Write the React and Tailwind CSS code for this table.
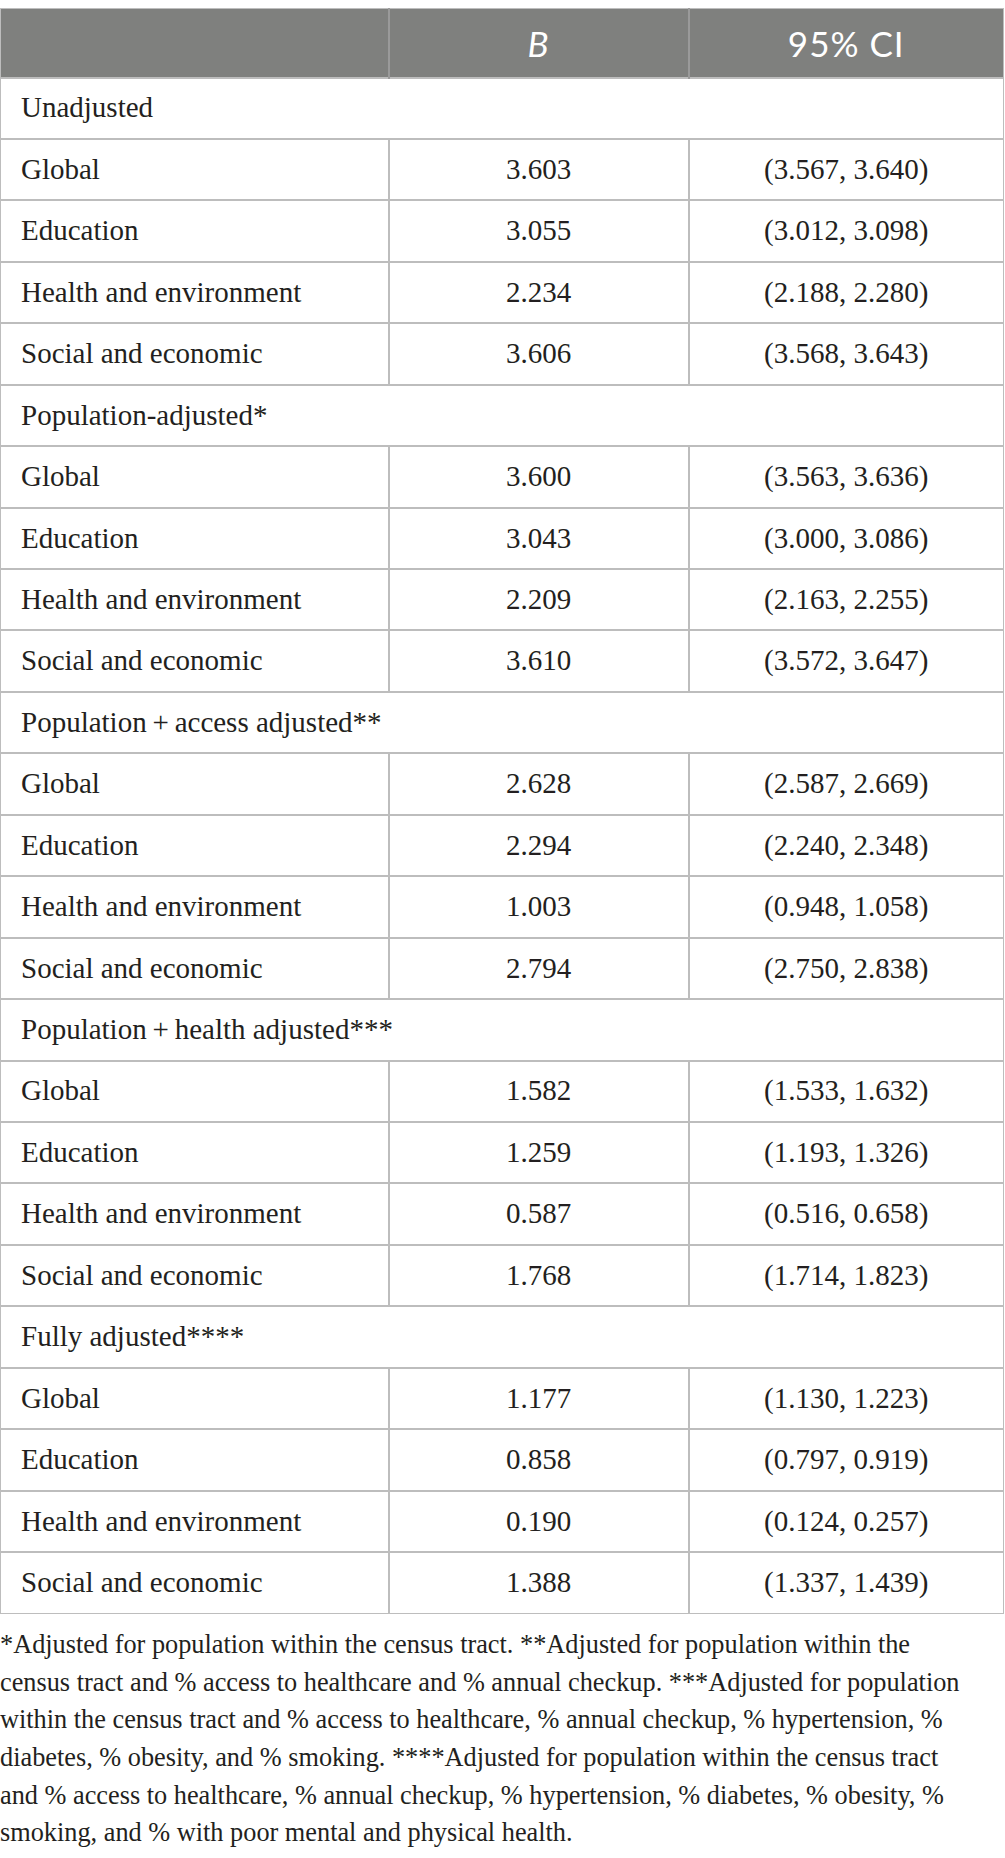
import React from 'react';

const groups = [
    {
        title: 'Unadjusted',
        rows: [
            ['Global', '3.603', '(3.567, 3.640)'],
            ['Education', '3.055', '(3.012, 3.098)'],
            ['Health and environment', '2.234', '(2.188, 2.280)'],
            ['Social and economic', '3.606', '(3.568, 3.643)'],
        ],
    },
    {
        title: 'Population-adjusted*',
        rows: [
            ['Global', '3.600', '(3.563, 3.636)'],
            ['Education', '3.043', '(3.000, 3.086)'],
            ['Health and environment', '2.209', '(2.163, 2.255)'],
            ['Social and economic', '3.610', '(3.572, 3.647)'],
        ],
    },
    {
        title: 'Population\u2009+\u2009access adjusted**',
        rows: [
            ['Global', '2.628', '(2.587, 2.669)'],
            ['Education', '2.294', '(2.240, 2.348)'],
            ['Health and environment', '1.003', '(0.948, 1.058)'],
            ['Social and economic', '2.794', '(2.750, 2.838)'],
        ],
    },
    {
        title: 'Population\u2009+\u2009health adjusted***',
        rows: [
            ['Global', '1.582', '(1.533, 1.632)'],
            ['Education', '1.259', '(1.193, 1.326)'],
            ['Health and environment', '0.587', '(0.516, 0.658)'],
            ['Social and economic', '1.768', '(1.714, 1.823)'],
        ],
    },
    {
        title: 'Fully adjusted****',
        rows: [
            ['Global', '1.177', '(1.130, 1.223)'],
            ['Education', '0.858', '(0.797, 0.919)'],
            ['Health and environment', '0.190', '(0.124, 0.257)'],
            ['Social and economic', '1.388', '(1.337, 1.439)'],
        ],
    },
];

// footnote wraps the same way as the printed table
const footnoteLines = [
    '*Adjusted for population within the census tract. **Adjusted for population within the',
    'census tract and % access to healthcare and % annual checkup. ***Adjusted for population',
    'within the census tract and % access to healthcare, % annual checkup, % hypertension, %',
    'diabetes, % obesity, and % smoking. ****Adjusted for population within the census tract',
    'and % access to healthcare, % annual checkup, % hypertension, % diabetes, % obesity, %',
    'smoking, and % with poor mental and physical health.',
];

const App = () => {
    return (
        <div className="w-[1005px] bg-white pt-2 text-[#231f20] font-['Liberation_Serif',serif]">
            <table className="w-[1004px] table-fixed border-collapse border border-[#bdbdbd]">
                <colgroup>
                    <col className="w-[388px]" />
                    <col className="w-[300px]" />
                    <col />
                </colgroup>
                <thead>
                    <tr className="h-[69px] bg-[#7f807e] text-white font-['Lato',sans-serif] text-[35px] tracking-[1px]">
                        <th className="border-r-2 border-[#9a9a9a]"></th>
                        <th className="border-r-2 border-[#9a9a9a] font-normal italic">B</th>
                        <th className="font-normal">95% CI</th>
                    </tr>
                </thead>
                <tbody className="text-[29px]">
                    {groups.map((group) => (
                        <React.Fragment key={group.title}>
                            <tr className="h-[61.44px] border-t-2 border-[#bdbdbd]">
                                <td colSpan={3} className="pl-[20px]">{group.title}</td>
                            </tr>
                            {group.rows.map((row) => (
                                <tr key={group.title + row[0]} className="h-[61.44px] border-t-2 border-[#bdbdbd]">
                                    <td className="pl-[20px] border-r-2 border-[#bdbdbd]">{row[0]}</td>
                                    <td className="text-center border-r-2 border-[#bdbdbd]">{row[1]}</td>
                                    <td className="text-center">{row[2]}</td>
                                </tr>
                            ))}
                        </React.Fragment>
                    ))}
                </tbody>
            </table>
            <p className="mt-[12px] text-[26.3px] leading-[37.7px]">
                {footnoteLines.map((line, i) => (
                    <span key={i} className="block whitespace-nowrap">{line}</span>
                ))}
            </p>
        </div>
    );
};

export default App;
